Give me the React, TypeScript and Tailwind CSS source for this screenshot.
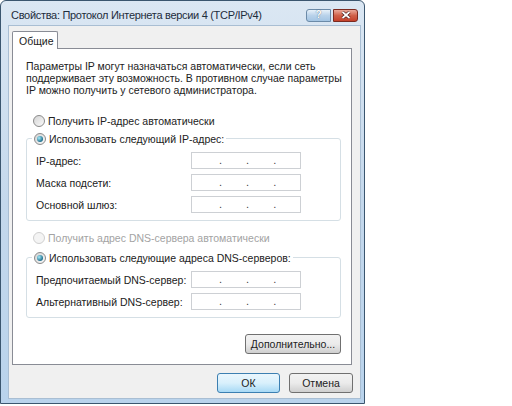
import React from "react"

function Radio({ checked, disabled }: { checked?: boolean; disabled?: boolean }) {
  return (
    <span
      className={`flex h-[12px] w-[12px] shrink-0 items-center justify-center rounded-full border ${
        disabled ? "border-[#cfcfcf] bg-[#f4f4f4]" : "border-[#8a8a8a] bg-gradient-to-br from-[#d4d4d4] to-[#fafafa]"
      }`}
    >
      {checked && <span className="h-[6px] w-[6px] rounded-full bg-[radial-gradient(circle_at_35%_35%,#a6ecfa,#1f6f8e_70%)]" />}
    </span>
  )
}

function RadioRow({ label, checked, disabled }: { label: string; checked?: boolean; disabled?: boolean }) {
  return (
    <div className={`flex h-[13px] items-center gap-[3px] whitespace-nowrap ${disabled ? "text-[#a3a3a3]" : "text-[#222]"}`}>
      <Radio checked={checked} disabled={disabled} />
      <span>{label}</span>
    </div>
  )
}

function IpBox() {
  return (
    <div className="flex h-[17px] w-[110px] shrink-0 items-end border border-[#cdd0d4] bg-white pb-[2px] text-[11px] leading-none text-[#444]">
      <span className="w-[27px]" />
      <span>.</span>
      <span className="w-[24px]" />
      <span>.</span>
      <span className="w-[24px]" />
      <span>.</span>
    </div>
  )
}

function Field({ label }: { label: string }) {
  return (
    <div className="flex h-[17px] items-center">
      <span className="w-[155px] whitespace-nowrap text-[#222]">{label}</span>
      <IpBox />
    </div>
  )
}

function Group({ legend, fields }: { legend: string; fields: string[] }) {
  return (
    <fieldset className="rounded-[3px] border border-[#d5dfe5] pb-[7px] pl-[9px] pr-[38px]">
      <legend className="ml-[-4px] px-[2px]">
        <RadioRow label={legend} checked />
      </legend>
      <div className="mt-[7px] flex flex-col gap-[5px]">
        {fields.map((f) => (
          <Field key={f} label={f} />
        ))}
      </div>
    </fieldset>
  )
}

function Button({ children, primary, className = "" }: { children: React.ReactNode; primary?: boolean; className?: string }) {
  return (
    <div
      className={`flex h-[20px] items-center justify-center whitespace-nowrap rounded-[3px] border text-[#222] ${
        primary
          ? "border-[#3c7fb1] bg-gradient-to-b from-[#eaf6fd] via-[#d9f0fc] to-[#a7d9f5]"
          : "border-[#707070] bg-gradient-to-b from-[#f2f2f2] via-[#ebebeb] to-[#cfcfcf]"
      } ${className}`}
    >
      {children}
    </div>
  )
}

export default function App() {
  return (
    <div className="h-[406px] w-[512px] bg-white font-['Liberation_Sans',sans-serif] text-[10.5px] leading-[12px]">
      <div className="flex h-[404px] w-[365px] flex-col rounded-t-[6px] border border-[#3b566f] bg-gradient-to-b from-[#dbe7f3] via-[#c4d8ec] to-[#b9d3ec]">
        {/* Title bar */}
        <div className="flex h-[24px] items-center pl-[10px] pr-[6px] pt-[4px]">
          <span className="flex-1 whitespace-nowrap text-[11px] tracking-[-0.3px] text-[#1e2d3c]">
            Свойства: Протокол Интернета версии 4 (TCP/IPv4)
          </span>
          <div className="flex h-[13px] w-[25px] items-center justify-center rounded-l-[3px] border border-[#6b8aa8] bg-gradient-to-b from-[#e8f1f9] via-[#b9d2ea] to-[#a3c4e3] text-[10px] font-bold text-[#fff] [text-shadow:0_0_1px_#2a4a6a]">
            ?
          </div>
          <div className="ml-[2px] flex h-[13px] w-[25px] items-center justify-center rounded-r-[3px] border border-[#7a2a20] bg-gradient-to-b from-[#e9a899] via-[#d0614a] to-[#c4402a]">
            <svg width="10" height="8" viewBox="0 0 10 8">
              <path d="M1.5 1 L8.5 7 M8.5 1 L1.5 7" stroke="#3a1010" strokeWidth="3" />
              <path d="M1.5 1 L8.5 7 M8.5 1 L1.5 7" stroke="#fff" strokeWidth="1.8" />
            </svg>
          </div>
        </div>

        {/* Client area */}
        <div className="mb-[4px] ml-[7px] mr-[3px] flex flex-1 flex-col border border-[#a9bed3] bg-[#f0f0f0] pl-[3px] pr-[7px] pt-[5px]">
          <div className="flex">
            <div className="relative z-10 -mb-px flex h-[18px] w-[46px] items-center rounded-t-[2px] border border-b-0 border-[#898c95] bg-white pl-[6px] text-[#222]">
              Общие
            </div>
          </div>
          <div className="flex h-[317px] w-[340px] flex-col border border-[#898c95] bg-white pl-[13px] pr-[10px] pt-[11px]">
            <p className="whitespace-nowrap text-[#222]">
              Параметры IP могут назначаться автоматически, если сеть
              <br />
              поддерживает эту возможность. В противном случае параметры
              <br />
              IP можно получить у сетевого администратора.
            </p>
            <div className="ml-[7px] mt-[18px]">
              <RadioRow label="Получить IP-адрес автоматически" />
            </div>
            <div className="mt-[5px]">
              <Group legend="Использовать следующий IP-адрес:" fields={["IP-адрес:", "Маска подсети:", "Основной шлюз:"]} />
            </div>
            <div className="ml-[7px] mt-[10px]">
              <RadioRow label="Получить адрес DNS-сервера автоматически" disabled />
            </div>
            <div className="mt-[7px]">
              <Group legend="Использовать следующие адреса DNS-серверов:" fields={["Предпочитаемый DNS-сервер:", "Альтернативный DNS-сервер:"]} />
            </div>
            <div className="mt-[16px] flex justify-end">
              <Button className="w-[96px]">Дополнительно...</Button>
            </div>
          </div>
          <div className="mt-[8px] flex justify-end gap-[9px]">
            <Button primary className="w-[63px]">
              ОК
            </Button>
            <Button className="w-[64px]">Отмена</Button>
          </div>
        </div>
      </div>
    </div>
  )
}
